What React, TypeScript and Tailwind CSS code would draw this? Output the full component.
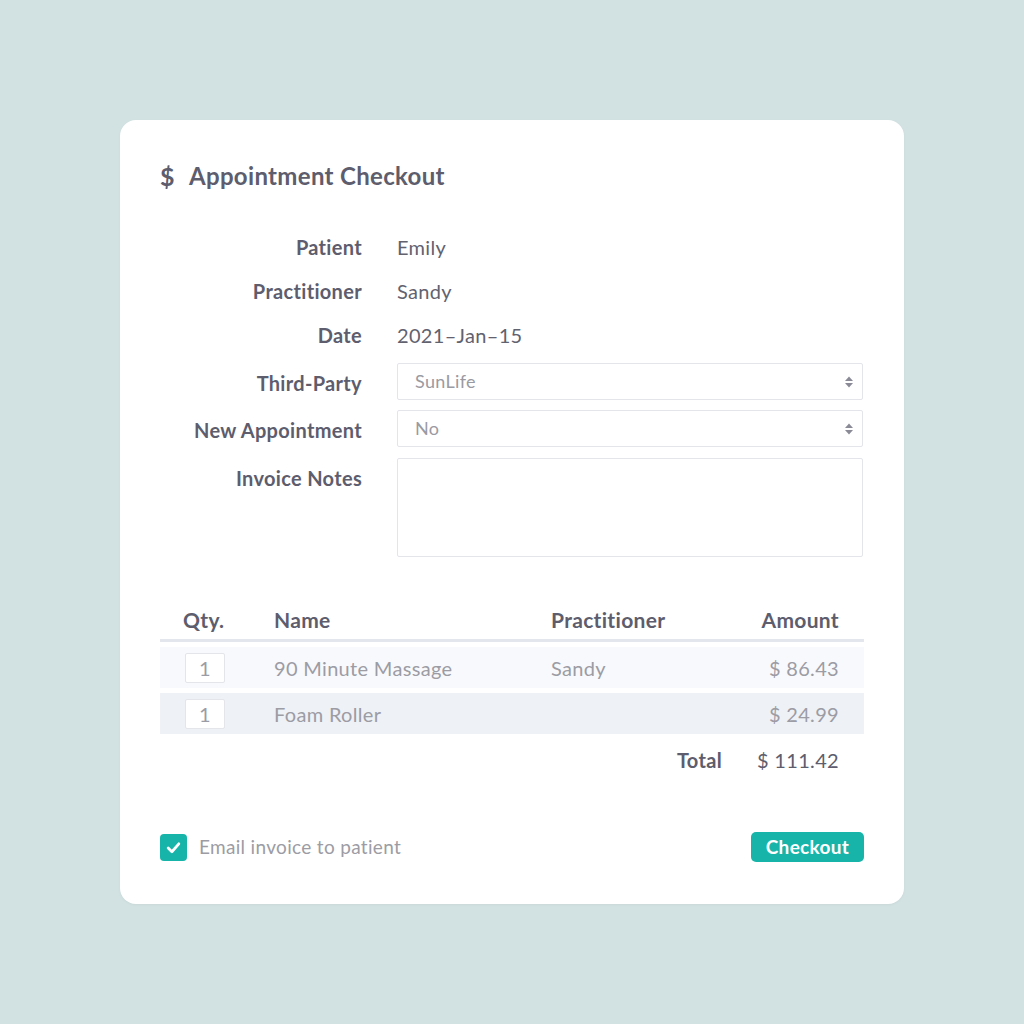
const font = { fontFamily: "Lato, 'Open Sans', sans-serif", letterSpacing: "0.02em" };

function Chevrons() {
  return (
    <svg width="10" height="14" viewBox="0 0 10 14" className="text-[#8a8a96]">
      <path d="M5 1.5 L9 6 H1 Z" fill="currentColor" />
      <path d="M5 12.5 L9 8 H1 Z" fill="currentColor" />
    </svg>
  );
}

function Select({ value }: { value: string }) {
  return (
    <div className="flex h-[37px] items-center justify-between rounded-[2px] border border-[#e3e5ea] bg-white pl-[17px] pr-[8px] text-[18px] text-[#9a9aa2]">
      <span>{value}</span>
      <Chevrons />
    </div>
  );
}

const items = [
  { qty: 1, name: "90 Minute Massage", practitioner: "Sandy", amount: "$ 86.43", bg: "bg-[#f8f9fc]" },
  { qty: 1, name: "Foam Roller", practitioner: "", amount: "$ 24.99", bg: "bg-[#eef1f6]" },
];

export default function App() {
  return (
    <div style={font} className="flex min-h-[1024px] items-center justify-center bg-[#d2e1e1]">
      <div className="w-[784px] h-[784px] rounded-[16px] bg-white px-[40px] pt-[40px] shadow-[0_1px_3px_rgba(0,0,0,0.04)]">
        {/* header */}
        <div className="flex items-center gap-[15px] h-[32px] text-[24px] font-bold text-[#5d5d6d]">
          <span className="w-[14px] text-[25px] leading-none">$</span>
          <span>Appointment Checkout</span>
        </div>

        {/* form */}
        <div className="mt-[40px] grid grid-cols-[202px_1fr] gap-x-[35px] text-[20px]">
          <div className="flex h-[44px] items-start justify-end font-bold text-[#5d5d6d]">Patient</div>
          <div className="h-[44px] text-[#62626f]">Emily</div>
          <div className="flex h-[44px] items-start justify-end font-bold text-[#5d5d6d]">Practitioner</div>
          <div className="h-[44px] text-[#62626f]">Sandy</div>
          <div className="flex h-[43px] items-start justify-end font-bold text-[#5d5d6d]">Date</div>
          <div className="h-[43px] text-[#62626f]">2021–Jan–15</div>

          <div className="flex h-[47px] items-start justify-end pt-[5px] font-bold text-[#5d5d6d]">Third-Party</div>
          <div className="h-[47px] pr-[1px]"><Select value="SunLife" /></div>
          <div className="flex h-[48px] items-start justify-end pt-[5px] font-bold text-[#5d5d6d]">New Appointment</div>
          <div className="h-[48px] pr-[1px]"><Select value="No" /></div>
          <div className="flex items-start justify-end pt-[5px] font-bold text-[#5d5d6d]">Invoice Notes</div>
          <div className="pr-[1px]">
            <div className="h-[99px] rounded-[2px] border border-[#e3e5ea] bg-white" />
          </div>
        </div>

        {/* table */}
        <div className="mt-[44px] text-[20px]">
          <div className="grid h-[41px] grid-cols-[90px_301px_1fr_1fr] items-center border-b-[3px] border-[#e3e6ec] pr-[25px] text-[21px] font-bold text-[#5d5d6d]">
            <span className="pl-[23px]">Qty.</span>
            <span className="pl-[24px]">Name</span>
            <span>Practitioner</span>
            <span className="text-right">Amount</span>
          </div>
          <div className="mt-[5px] flex flex-col gap-[5px]">
            {items.map((it) => (
              <div
                key={it.name}
                className={`grid h-[41px] grid-cols-[90px_301px_1fr_1fr] items-center pr-[25px] text-[#9c9ca4] ${it.bg}`}
              >
                <div className="pl-[25px]">
                  <div className="flex h-[30px] w-[40px] items-center justify-center rounded-[2px] border border-[#e3e5ea] bg-white">
                    {it.qty}
                  </div>
                </div>
                <span className="pl-[24px]">{it.name}</span>
                <span>{it.practitioner}</span>
                <span className="text-right">{it.amount}</span>
              </div>
            ))}
          </div>
          <div className="mt-[11px] flex h-[30px] items-center justify-end pr-[25px] text-[#5d5d6d]">
            <span className="font-bold">Total</span>
            <span className="ml-[35px]">$ 111.42</span>
          </div>
        </div>

        {/* footer */}
        <div className="mt-[57px] flex items-center justify-between">
          <div className="flex items-center gap-[12px]">
            <div className="flex h-[27px] w-[27px] items-center justify-center rounded-[4px] bg-[#17b4a9]">
              <svg width="17" height="17" viewBox="0 0 16 16" fill="none">
                <path d="M3 8.5 L6.5 12 L13 4.5" stroke="white" strokeWidth="2.6" strokeLinecap="round" strokeLinejoin="round" />
              </svg>
            </div>
            <span className="text-[19px] text-[#9c9ca4]">Email invoice to patient</span>
          </div>
          <button className="flex h-[30px] w-[113px] items-center justify-center rounded-[5px] bg-[#17b4a9] text-[19px] font-bold text-white">
            Checkout
          </button>
        </div>
      </div>
    </div>
  );
}
